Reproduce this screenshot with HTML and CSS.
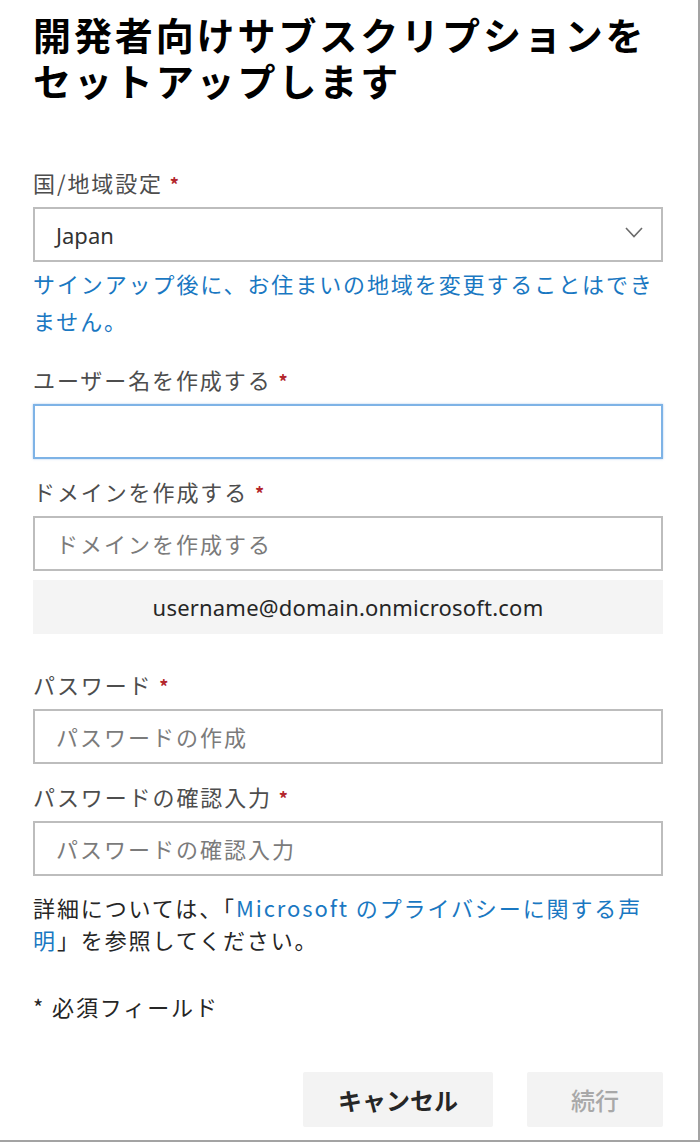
FILE: index.html
```html
<!DOCTYPE html>
<html lang="ja">
<head>
<meta charset="utf-8">
<title>開発者向けサブスクリプションをセットアップします</title>
<link rel="stylesheet" href="styles.css">
</head>
<body>
<div class="page">
  <h1 class="title">開発者向けサブスクリプションをセットアップします</h1>

  <div class="field first">
    <div class="label">国/地域設定 <span class="req">*</span></div>
    <div class="select">
      <span class="select-value">Japan</span>
      <svg class="chevron" width="18" height="11" viewBox="0 0 18 11"><polyline points="1,1 9,9.5 17,1" fill="none" stroke="#6b6b6b" stroke-width="1.6"/></svg>
    </div>
  </div>
  <p class="note">サインアップ後に、お住まいの地域を変更することはできません。</p>

  <div class="field after-note">
    <div class="label">ユーザー名を作成する <span class="req">*</span></div>
    <input class="input focus" type="text">
  </div>

  <div class="field">
    <div class="label">ドメインを作成する <span class="req">*</span></div>
    <input class="input" type="text" placeholder="ドメインを作成する">
  </div>
  <div class="preview">username@domain.onmicrosoft.com</div>

  <div class="field after-preview">
    <div class="label">パスワード <span class="req">*</span></div>
    <input class="input" type="password" placeholder="パスワードの作成">
  </div>

  <div class="field">
    <div class="label">パスワードの確認入力 <span class="req">*</span></div>
    <input class="input" type="password" placeholder="パスワードの確認入力">
  </div>

  <p class="privacy">詳細については、「<a href="#" class="link">Microsoft のプライバシーに関する声明</a>」を参照してください。</p>

  <p class="required">* 必須フィールド</p>

  <div class="actions">
    <button class="btn cancel" type="button">キャンセル</button>
    <button class="btn next" type="button" disabled>続行</button>
  </div>
</div>
</body>
</html>
```

FILE: styles.css
```css
* { box-sizing: border-box; }

html, body {
  margin: 0;
  padding: 0;
  background: #ffffff;
}

body {
  font-family: "Noto Sans", "Noto Sans CJK JP", sans-serif;
  color: #222222;
}

.page {
  width: 700px;
  height: 1142px;
  padding: 11px 35px 0 33px;
  border-right: 2px solid #a3a3a3;
  border-bottom: 2px solid #a3a3a3;
  display: flex;
  flex-direction: column;
}

.title {
  margin: 0;
  font-family: "Noto Sans CJK JP", sans-serif;
  font-size: 38px;
  line-height: 46px;
  font-weight: 700;
  letter-spacing: 2.9px;
  color: #000000;
}

.field {
  display: flex;
  flex-direction: column;
  gap: 10px;
  margin-top: 17px;
}

.field.first { margin-top: 64px; }
.field.after-note { margin-top: 25px; }
.field.after-preview { margin-top: 35px; }

.label {
  height: 30px;
  font-family: "Noto Sans CJK JP", sans-serif;
  font-size: 22px;
  line-height: 30px;
  letter-spacing: 1.9px;
  color: #4d4d4d;
}

.req {
  color: #b3262c;
  font-weight: 700;
  font-size: 18px;
  line-height: 1;
}

.select {
  height: 55px;
  border: 2px solid #bdbdbd;
  display: flex;
  align-items: center;
  justify-content: space-between;
  padding: 0 18px 0 21px;
}

.select-value {
  font-size: 22px;
  color: #333333;
}

.chevron { display: block; margin-top: -4px; }

.note {
  margin: 3px 0 0;
  font-family: "Noto Sans CJK JP", sans-serif;
  font-size: 22px;
  line-height: 37px;
  letter-spacing: 1.9px;
  color: #1a78c2;
}

.input {
  display: block;
  width: 100%;
  height: 55px;
  margin: 0;
  border: 2px solid #bdbdbd;
  border-radius: 0;
  padding: 0 20px 0 21px;
  font-family: "Noto Sans", "Noto Sans CJK JP", sans-serif;
  font-size: 22px;
  letter-spacing: 2px;
  color: #222222;
  background: #ffffff;
  outline: none;
}

.input::placeholder { color: #7b7b7b; }

.input.focus {
  border-color: #7eb3e6;
  box-shadow: 0 0 2px rgba(90, 150, 220, 0.5);
}

.preview {
  margin-top: 9px;
  height: 54px;
  background: #f4f4f4;
  display: flex;
  align-items: center;
  justify-content: center;
  font-size: 22px;
  letter-spacing: 0.2px;
  color: #262626;
}

.privacy {
  margin: 15px 0 0;
  font-family: "Noto Sans CJK JP", sans-serif;
  font-size: 22px;
  line-height: 32px;
  letter-spacing: 1.9px;
  color: #262626;
}

.link {
  color: #1a78c2;
  text-decoration: none;
}

.required {
  margin: 35px 0 0;
  font-family: "Noto Sans CJK JP", sans-serif;
  font-size: 22px;
  line-height: 32px;
  letter-spacing: 1.9px;
  color: #262626;
}

.actions {
  margin-top: 50px;
  display: flex;
  justify-content: flex-end;
  gap: 34px;
}

.btn {
  height: 55px;
  border: none;
  border-radius: 2px;
  background: #f3f3f3;
  font-family: "Noto Sans CJK JP", sans-serif;
  font-size: 24px;
  padding: 0;
}

.btn.cancel {
  width: 190px;
  font-weight: 700;
  color: #262626;
}

.btn.next {
  width: 136px;
  font-weight: 500;
  color: #a8a8a8;
}
```
